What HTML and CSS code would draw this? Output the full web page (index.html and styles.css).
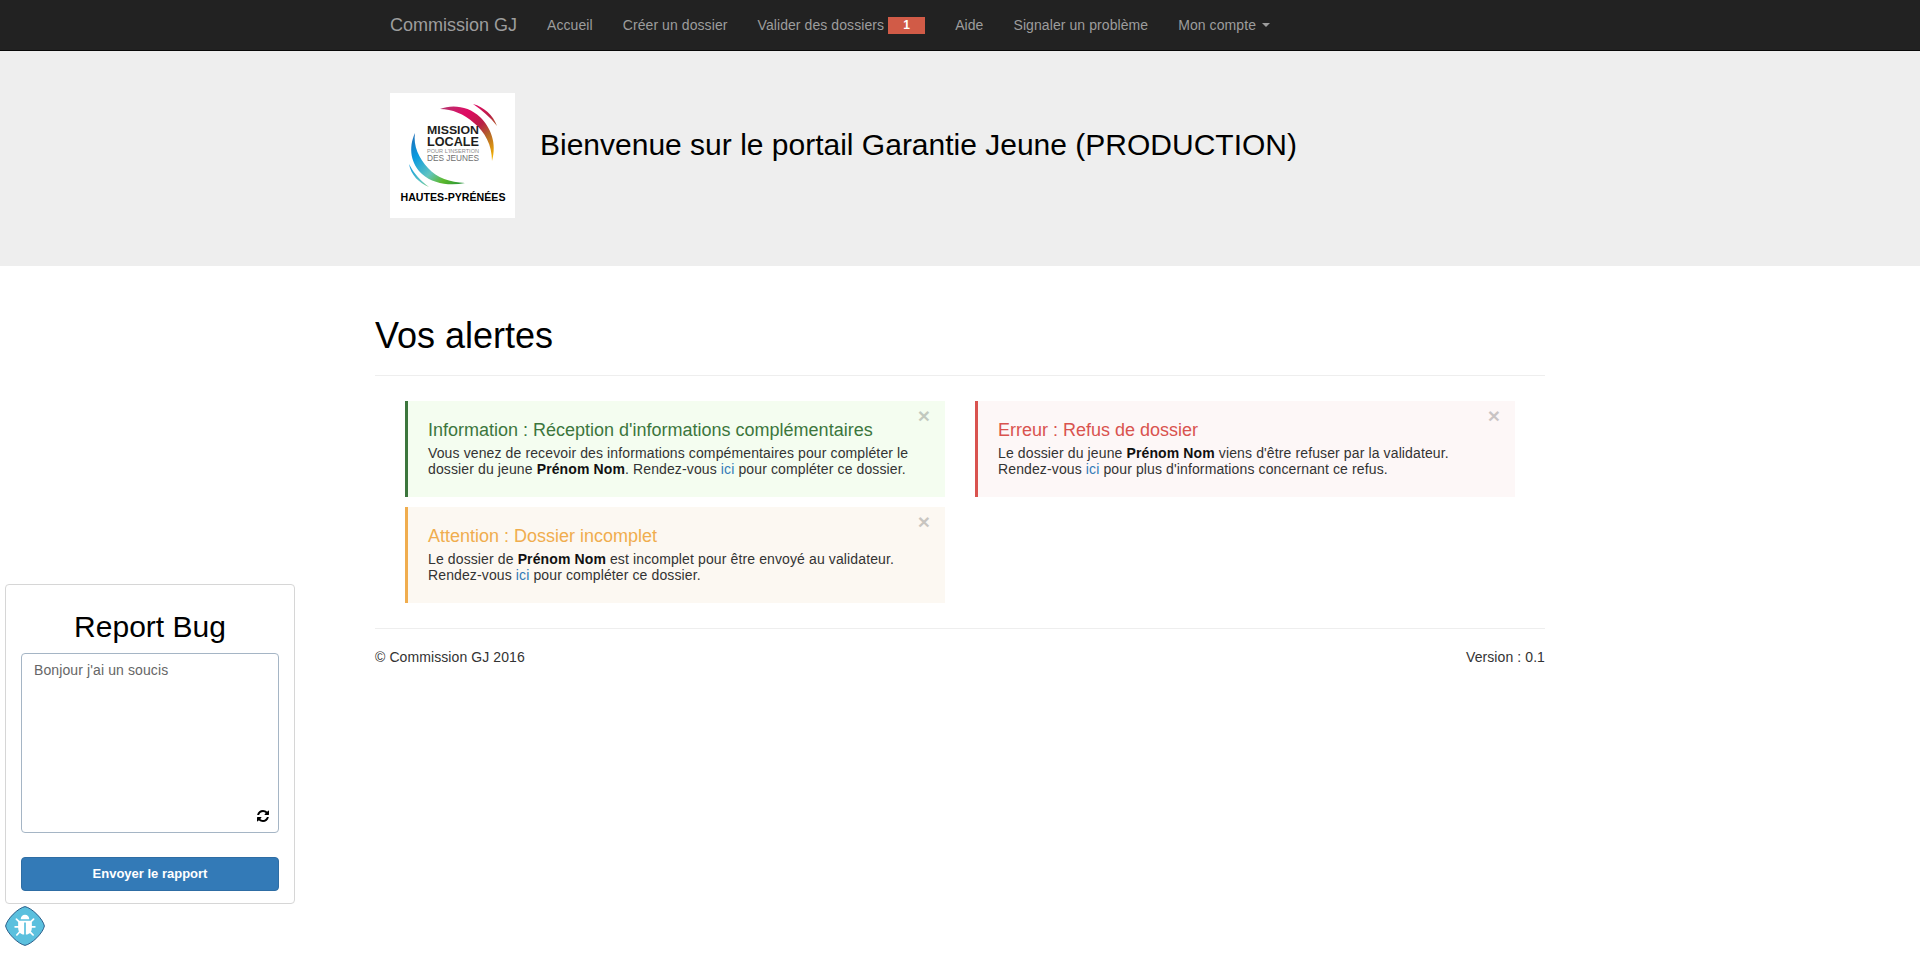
FILE: index.html
```html
<!DOCTYPE html>
<html lang="fr">
<head>
<meta charset="utf-8">
<title>Commission GJ</title>
<link rel="stylesheet" href="styles.css">
</head>
<body>
<nav class="navbar">
  <div class="nav-inner">
    <a class="brand" href="#">Commission GJ</a>
    <a class="nav-link" href="#">Accueil</a>
    <a class="nav-link" href="#">Créer un dossier</a>
    <a class="nav-link" href="#">Valider des dossiers<span class="badge">1</span></a>
    <a class="nav-link" href="#">Aide</a>
    <a class="nav-link" href="#">Signaler un problème</a>
    <a class="nav-link" href="#">Mon compte<span class="caret"></span></a>
  </div>
</nav>

<header class="jumbotron">
  <div class="jumbo-inner">
    <svg class="logo" viewBox="0 0 125 125" width="125" height="125" role="img" aria-label="Mission Locale Hautes-Pyrénées">
      <defs>
        <linearGradient id="gradTop" x1="50" y1="14" x2="100" y2="68" gradientUnits="userSpaceOnUse">
          <stop offset="0" stop-color="#b2386f"/>
          <stop offset="0.3" stop-color="#e00a63"/>
          <stop offset="0.55" stop-color="#b81f45"/>
          <stop offset="0.72" stop-color="#b3652a"/>
          <stop offset="1" stop-color="#f5b400"/>
        </linearGradient>
        <linearGradient id="gradBot" x1="24" y1="40" x2="76" y2="90" gradientUnits="userSpaceOnUse">
          <stop offset="0" stop-color="#1e6fb8"/>
          <stop offset="0.25" stop-color="#0a9be0"/>
          <stop offset="0.55" stop-color="#63c5c0"/>
          <stop offset="0.75" stop-color="#5cb82c"/>
          <stop offset="1" stop-color="#1f8f3a"/>
        </linearGradient>
      </defs>
      <rect class="logo-bg" width="125" height="125"/>
      <path fill="url(#gradTop)" d="M50 16 C62 11 79 13 90 24 C101 35 107 50 102 68 C102 52 95 39 84 30 C74 21 62 16 50 16Z"/>
      <path fill="url(#gradTop)" d="M83 11 C94 14 103 22 107 33 C100 24 92 17 83 11Z"/>
      <path fill="url(#gradBot)" d="M25 40 C18 55 21 71 32 81 C43 91 60 93 75 90 C60 89 47 85 38 75 C29 65 23 53 25 40Z"/>
      <path fill="url(#gradBot)" d="M19 71 C21 82 29 90 39 94 C31 88 24 81 19 71Z"/>
      <text class="logo-t1" x="37" y="41" textLength="52" lengthAdjust="spacingAndGlyphs">MISSION</text>
      <text class="logo-t2" x="37" y="53" textLength="52" lengthAdjust="spacingAndGlyphs">LOCALE</text>
      <text class="logo-t3" x="37" y="60" textLength="52" lengthAdjust="spacingAndGlyphs">POUR L'INSERTION</text>
      <text class="logo-t4" x="37" y="68" textLength="52" lengthAdjust="spacingAndGlyphs">DES JEUNES</text>
      <text class="logo-t5" x="10.5" y="108" textLength="105" lengthAdjust="spacingAndGlyphs">HAUTES-PYRÉNÉES</text>
    </svg>
    <h2 class="welcome">Bienvenue sur le portail Garantie Jeune (PRODUCTION)</h2>
  </div>
</header>

<main class="container">
  <div class="page-header"><h1>Vos alertes</h1></div>
  <section class="alerts">
    <article class="alert alert-info">
      <span class="close">×</span>
      <h4>Information : Réception d'informations complémentaires</h4>
      <p>Vous venez de recevoir des informations compémentaires pour compléter le dossier du jeune <b>Prénom Nom</b>. Rendez-vous <a href="#">ici</a> pour compléter ce dossier.</p>
    </article>
    <article class="alert alert-error">
      <span class="close">×</span>
      <h4>Erreur : Refus de dossier</h4>
      <p>Le dossier du jeune <b>Prénom Nom</b> viens d'être refuser par la validateur. Rendez-vous <a href="#">ici</a> pour plus d'informations concernant ce refus.</p>
    </article>
    <article class="alert alert-warn">
      <span class="close">×</span>
      <h4>Attention : Dossier incomplet</h4>
      <p>Le dossier de <b>Prénom Nom</b> est incomplet pour être envoyé au validateur. Rendez-vous <a href="#">ici</a> pour compléter ce dossier.</p>
    </article>
  </section>
  <footer class="footer">
    <span>© Commission GJ 2016</span>
    <span>Version : 0.1</span>
  </footer>
</main>

<aside class="bug-panel">
  <h2>Report Bug</h2>
  <div class="bug-field">
    <textarea class="bug-text" readonly>Bonjour j'ai un soucis</textarea>
    <svg class="bug-refresh" viewBox="0 0 1792 1792" width="14" height="14"><path d="M1639 1056q0 5-1 7-64 268-268 434.5t-478 166.5q-146 0-282.5-55t-243.5-157l-129 129q-19 19-45 19t-45-19-19-45v-448q0-26 19-45t45-19h448q26 0 45 19t19 45-19 45l-137 137q71 66 161 102t187 36q134 0 250-65t186-179q11-17 53-117 8-23 30-23h192q13 0 22.5 9.5t9.5 22.5zm25-800v448q0 26-19 45t-45 19h-448q-26 0-45-19t-19-45 19-45l138-138q-148-137-349-137-134 0-250 65t-186 179q-11 17-53 117-8 23-30 23h-199q-13 0-22.5-9.5t-9.5-22.5v-7q65-268 270-434.5t480-166.5q146 0 284 55.5t245 156.5l130-129q19-19 45-19t45 19 19 45z"/></svg>
  </div>
  <button class="bug-send" type="button">Envoyer le rapport</button>
</aside>
<svg class="bug-toggle" viewBox="0 0 40 40" width="40" height="40">
  <path class="bug-shape" d="M20 .6C27 2 38 13 39.4 20 38 27 27 38 20 39.4 13 38 2 27 .6 20 2 13 13 2 20 .6Z"/>
  <svg x="8" y="8" width="24" height="24" viewBox="0 0 1792 1792"><path class="bug-glyph" d="M1696 960q0 26-19 45t-45 19h-224q0 171-67 290l208 209q19 19 19 45t-19 45q-18 19-45 19t-45-19l-198-197q-5 5-15 13t-42 28.5-65 36.5-82 29-97 13v-896h-128v896q-51 0-101.5-13.5t-87-33-66-39-43.5-32.5l-15-14-183 207q-20 21-48 21-24 0-43-16-19-18-20.5-44.5t15.5-46.5l202-227q-58-114-58-274h-224q-26 0-45-19t-19-45 19-45 45-19h224v-294l-173-173q-19-19-19-45t19-45 45-19 45 19l173 173h844l173-173q19-19 45-19t45 19 19 45-19 45l-173 173v294h224q26 0 45 19t19 45zm-480-576h-640q0-133 93.5-226.5t226.5-93.5 226.5 93.5 93.5 226.5z"/></svg>
</svg>
</body>
</html>
```
FILE: styles.css
```css
* { box-sizing: border-box; }
html, body { margin: 0; padding: 0; }
body {
  font-family: "Liberation Sans", Arial, sans-serif;
  font-size: 14px;
  line-height: 20px;
  color: #333;
  background: #fff;
  min-height: 971px;
  position: relative;
}
a { text-decoration: none; }

.navbar {
  height: 51px;
  background: #222;
  border-bottom: 1px solid #080808;
}
.nav-inner {
  width: 1170px;
  margin: 0 auto;
  display: flex;
  align-items: center;
  height: 50px;
}
.brand {
  font-size: 18px;
  color: #9d9d9d;
  padding: 0 15px;
}
.nav-link {
  color: #9d9d9d;
  padding: 0 15px;
  display: flex;
  align-items: center;
  letter-spacing: .08px;
}
.badge {
  width: 37px;
  height: 17px;
  margin-left: 4px;
  background: #d15b47;
  color: #fff;
  font-size: 12px;
  font-weight: bold;
  line-height: 17px;
  text-align: center;
}
.caret {
  width: 0;
  height: 0;
  margin-left: 6px;
  border-top: 4px solid #9d9d9d;
  border-left: 4px solid transparent;
  border-right: 4px solid transparent;
}

.jumbotron {
  height: 215px;
  background: #eee;
  padding-top: 42px;
}
.jumbo-inner {
  width: 1170px;
  margin: 0 auto;
  padding-left: 15px;
  display: flex;
  align-items: flex-start;
  gap: 25px;
}
.logo { display: block; flex: none; }
.logo-bg { fill: #fff; }
.logo-t1, .logo-t2, .logo-t5 { font-family: "Liberation Sans", Arial, sans-serif; font-weight: bold; fill: #1d1d1b; }
.logo-t1 { font-size: 11.5px; }
.logo-t2 { font-size: 13.5px; }
.logo-t3 { font-family: "Liberation Sans", Arial, sans-serif; font-size: 4.8px; fill: #8a8a8a; }
.logo-t4 { font-family: "Liberation Sans", Arial, sans-serif; font-size: 9px; fill: #6f6f6f; }
.logo-t5 { font-size: 10px; fill: #000; }
.welcome {
  margin: 35px 0 0;
  font-size: 30px;
  font-weight: 500;
  line-height: 33px;
  color: #000;
}

.container {
  width: 1170px;
  margin: 0 auto;
}
.page-header {
  margin: 0 0 25px;
  padding: 50px 0 9px;
  border-bottom: 1px solid #eee;
}
.page-header h1 {
  margin: 0 0 10px;
  font-size: 36px;
  font-weight: 500;
  line-height: 40px;
  color: #000;
}
.alerts {
  display: grid;
  grid-template-columns: 540px 540px;
  gap: 10px 30px;
  padding: 0 30px;
}
.alert {
  position: relative;
  height: 96px;
  padding: 19px 20px 0;
  border-left: 3px solid;
  font-size: 14px;
  line-height: 16px;
  color: #333;
}
.alert h4 {
  margin: 0 0 5px;
  font-size: 18px;
  font-weight: 500;
  line-height: 20px;
}
.alert p { margin: 0; letter-spacing: .12px; }
.alert b { color: #111; }
.alert a { color: #337ab7; }
.close {
  position: absolute;
  top: 4px;
  right: 15px;
  font-size: 21px;
  font-weight: bold;
  line-height: 21px;
  color: #000;
  opacity: .2;
}
.alert-info { background: #f4fdf0; border-color: #3c763d; }
.alert-info h4 { color: #3c763d; }
.alert-error { background: #fdf7f7; border-color: #d9534f; }
.alert-error h4 { color: #d9534f; }
.alert-warn { background: #fcf8f2; border-color: #f0ad4e; }
.alert-warn h4 { color: #f0ad4e; }

.footer {
  margin-top: 25px;
  padding-top: 18px;
  border-top: 1px solid #eee;
  display: flex;
  justify-content: space-between;
  letter-spacing: .09px;
}

.bug-panel {
  position: absolute;
  left: 5px;
  top: 584px;
  width: 290px;
  height: 320px;
  padding: 0 15px;
  background: #fff;
  border: 1px solid #d6d6d6;
  border-radius: 4px;
}
.bug-panel h2 {
  margin: 25px 0 10px;
  font-size: 30px;
  font-weight: 500;
  line-height: 33px;
  color: #000;
  text-align: center;
}
.bug-field {
  position: relative;
  height: 180px;
}
.bug-text {
  display: block;
  width: 100%;
  height: 100%;
  padding: 6px 12px;
  border: 1px solid #a5b5c5;
  border-radius: 4px;
  font: 14px/20px "Liberation Sans", Arial, sans-serif;
  letter-spacing: .11px;
  color: #666;
  resize: none;
  outline: none;
}
.bug-refresh {
  position: absolute;
  right: 9px;
  bottom: 10px;
  fill: #000;
}
.bug-send {
  display: block;
  width: 100%;
  height: 34px;
  margin-top: 24px;
  background: #337ab7;
  border: 1px solid #2e6da4;
  border-radius: 4px;
  color: #fff;
  font: bold 13px/20px "Liberation Sans", Arial, sans-serif;
}
.bug-toggle {
  position: absolute;
  left: 5px;
  top: 906px;
}
.bug-shape { fill: #5bc0de; stroke: #2e5f8a; stroke-width: 1; }
.bug-glyph { fill: #fff; }
```
